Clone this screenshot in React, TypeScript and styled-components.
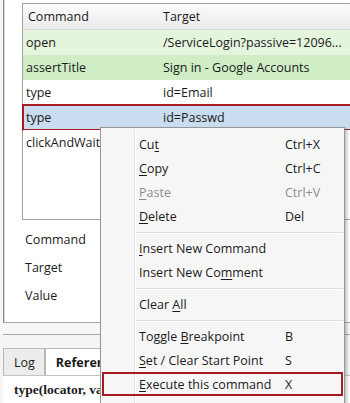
import React from 'react'
import styled, { createGlobalStyle, css } from 'styled-components'

const GlobalStyle = createGlobalStyle`
  html, body {
    margin: 0;
    padding: 0;
    background: #f5f5f5;
  }
  body {
    font-family: 'Open Sans', 'Noto Sans', sans-serif;
    color: #1b1b1b;
  }
`

type RowTone = 'plain' | 'done' | 'passed' | 'selected'

interface CommandRow {
  command: string
  target: string
  tone: RowTone
}

const rows: CommandRow[] = [
  { command: 'open', target: '/ServiceLogin?passive=12096...', tone: 'done' },
  { command: 'assertTitle', target: 'Sign in - Google Accounts', tone: 'passed' },
  { command: 'type', target: 'id=Email', tone: 'plain' },
  { command: 'type', target: 'id=Passwd', tone: 'selected' },
  { command: 'clickAndWait', target: 'id=signIn', tone: 'plain' },
]

// label split in three so the access key can be underlined
interface MenuEntry {
  before: string
  key: string
  after: string
  shortcut?: string
  disabled?: boolean
  marked?: boolean
}

const menuGroups: MenuEntry[][] = [
  [
    { before: 'Cu', key: 't', after: '', shortcut: 'Ctrl+X' },
    { before: '', key: 'C', after: 'opy', shortcut: 'Ctrl+C' },
    { before: '', key: 'P', after: 'aste', shortcut: 'Ctrl+V', disabled: true },
    { before: '', key: 'D', after: 'elete', shortcut: 'Del' },
  ],
  [
    { before: '', key: 'I', after: 'nsert New Command' },
    { before: 'Insert New Co', key: 'm', after: 'ment' },
  ],
  [{ before: 'Clear ', key: 'A', after: 'll' }],
  [
    { before: 'Toggle ', key: 'B', after: 'reakpoint', shortcut: 'B' },
    { before: '', key: 'S', after: 'et / Clear Start Point', shortcut: 'S' },
    { before: '', key: 'E', after: 'xecute this command', shortcut: 'X', marked: true },
  ],
]

const toneColors: Record<RowTone, string> = {
  plain: '#ffffff',
  done: '#e5f4dd',
  passed: '#cfeec5',
  selected: '#c9dcf0',
}

const Screen = styled.div`
  position: relative;
  width: 350px;
  height: 403px;
  overflow: hidden;
  display: flex;
  flex-direction: column;
  background: #f5f5f5;
`

const EditorPanel = styled.div`
  height: 322px;
  margin-left: 3px;
  padding: 3px 0 0 18px;
  box-sizing: border-box;
  display: flex;
  flex-direction: column;
  background: #ffffff;
  border-left: 1px solid #8f8f8f;
  box-shadow: inset 1px 0 0 #d6d6d6;
`

const Grid = styled.div`
  width: calc(100% + 12px);
  height: 217px;
  box-sizing: border-box;
  display: flex;
  flex-direction: column;
  border: 1px solid #a3a3a3;
  background: #ffffff;
`

const HeaderRow = styled.div`
  height: 25px;
  display: grid;
  grid-template-columns: 137px 1fr;
  align-items: center;
  font-size: 12.5px;
  background: linear-gradient(#fbfbfb, #ebebeb);
  border-bottom: 1px solid #d9d9d9;
  & > div:first-child {
    padding-left: 5px;
  }
`

const Cell = styled.div`
  padding-left: 3px;
  white-space: nowrap;
  overflow: hidden;
`

const Row = styled.div<{ $tone: RowTone }>`
  height: 25px;
  display: grid;
  grid-template-columns: 137px 1fr;
  align-items: center;
  font-size: 12.5px;
  background: ${(p) => toneColors[p.$tone]};
  ${(p) =>
    p.$tone === 'selected' &&
    css`
      outline: 2px solid #a51d22;
      outline-offset: -1px;
    `}
`

const Fields = styled.div`
  display: flex;
  flex-direction: column;
  padding: 10px 0 0 3px;
  gap: 8px;
`

const FieldLabel = styled.div`
  height: 20px;
  line-height: 20px;
  font-size: 12.5px;
`

const Splitter = styled.div`
  height: 11px;
  background: #f7f7f7;
  border-top: 1px solid #a8a8a8;
  border-bottom: 1px solid #a8a8a8;
  margin-left: 3px;
`

const TabStrip = styled.div`
  display: flex;
  margin-top: 13px;
  margin-left: 3px;
  height: 27px;
  border-bottom: 1px solid #c4c4c4;
`

const Tab = styled.div<{ $active?: boolean }>`
  display: flex;
  align-items: center;
  padding: 0 9px 0 10px;
  font-size: 12.5px;
  font-weight: ${(p) => (p.$active ? 700 : 400)};
  background: ${(p) => (p.$active ? '#ffffff' : '#ececec')};
  border: 1px solid #b8b8b8;
  border-bottom: none;
`

const RefBody = styled.div`
  flex: 1;
  background: #ffffff;
  margin-left: 3px;
  padding: 6px 0 0 11px;
  font-family: 'Liberation Serif', 'DejaVu Serif', serif;
  font-weight: 700;
  font-size: 13.5px;
  white-space: nowrap;
`

const ContextMenu = styled.div`
  position: absolute;
  left: 100px;
  top: 127px;
  width: 245px;
  height: 290px;
  box-sizing: border-box;
  padding: 4px 1px;
  background: #f6f6f6;
  border: 1px solid #979797;
  box-shadow: 2px 2px 3px rgba(0, 0, 0, 0.25);
  display: flex;
  flex-direction: column;
  &:before {
    content: '';
    position: absolute;
    top: 2px;
    bottom: 2px;
    left: 33px;
    width: 1px;
    background: #e2e2e2;
    box-shadow: 1px 0 0 #ffffff;
  }
`

const MenuItem = styled.div<{ $disabled?: boolean; $marked?: boolean }>`
  position: relative;
  height: 24px;
  box-sizing: border-box;
  display: grid;
  grid-template-columns: 1fr 58px;
  align-items: center;
  padding-left: 37px;
  font-size: 12.5px;
  color: ${(p) => (p.$disabled ? '#8e8e8e' : '#1b1b1b')};
  ${(p) =>
    p.$marked &&
    css`
      outline: 2px solid #a51d22;
      outline-offset: -2px;
    `}
`

const AccessKey = styled.span`
  text-decoration: underline;
  text-underline-offset: 2px;
`

const Separator = styled.div`
  height: 8px;
  margin-left: 34px;
  display: flex;
  align-items: center;
  &:after {
    content: '';
    flex: 1;
    height: 1px;
    background: #dcdcdc;
    box-shadow: 0 1px 0 #ffffff;
  }
`

const App: React.FC = () => {
  return (
    <>
      <GlobalStyle />
      <Screen>
        <EditorPanel>
          <Grid>
            <HeaderRow>
              <Cell>Command</Cell>
              <Cell>Target</Cell>
            </HeaderRow>
            {rows.map((row, i) => (
              <Row key={i} $tone={row.tone}>
                <Cell>{row.command}</Cell>
                <Cell>{row.target}</Cell>
              </Row>
            ))}
          </Grid>
          <Fields>
            <FieldLabel>Command</FieldLabel>
            <FieldLabel>Target</FieldLabel>
            <FieldLabel>Value</FieldLabel>
          </Fields>
        </EditorPanel>
        <Splitter />
        <TabStrip>
          <Tab>Log</Tab>
          <Tab $active>Reference</Tab>
        </TabStrip>
        <RefBody>type(locator, value)</RefBody>

        <ContextMenu>
          {menuGroups.map((group, gi) => (
            <React.Fragment key={gi}>
              {gi > 0 && <Separator />}
              {group.map((item, ii) => (
                <MenuItem key={ii} $disabled={item.disabled} $marked={item.marked}>
                  <span>
                    {item.before}
                    <AccessKey>{item.key}</AccessKey>
                    {item.after}
                  </span>
                  <span>{item.shortcut}</span>
                </MenuItem>
              ))}
            </React.Fragment>
          ))}
        </ContextMenu>
      </Screen>
    </>
  )
}

export default App
